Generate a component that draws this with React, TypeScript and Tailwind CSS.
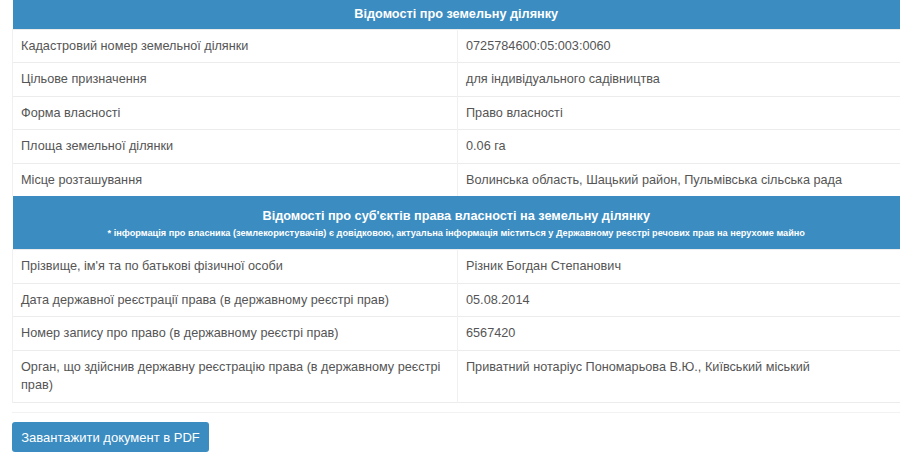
import React from 'react';

type Row = { label: React.ReactNode; value: string };

const landRows: Row[] = [
  { label: 'Кадастровий номер земельної ділянки', value: '0725784600:05:003:0060' },
  { label: 'Цільове призначення', value: 'для індивідуального садівництва' },
  { label: 'Форма власності', value: 'Право власності' },
  { label: 'Площа земельної ділянки', value: '0.06 га' },
  { label: 'Місце розташування', value: 'Волинська область, Шацький район, Пульмівська сільська рада' },
];

const ownerRows: Row[] = [
  { label: "Прізвище, ім'я та по батькові фізичної особи", value: 'Різник Богдан Степанович' },
  { label: 'Дата державної реєстрації права (в державному реєстрі прав)', value: '05.08.2014' },
  { label: 'Номер запису про право (в державному реєстрі прав)', value: '6567420' },
  {
    label: 'Орган, що здійснив державну реєстрацію права (в державному реєстрі прав)',
    value: 'Приватний нотаріус Пономарьова В.Ю., Київський міський',
  },
];

function DataRow({ row, last }: { row: Row; last?: boolean }) {
  return (
    <tr className="border-t border-[#ececec]">
      <td
        className={`w-[445px] border-l border-[#f0f0f0] px-[8px] pt-[7px] align-top leading-[18.6px] ${
          last ? 'pb-[7px]' : 'pb-[7px]'
        }`}
      >
        {row.label}
      </td>
      <td className="border-l border-[#f0f0f0] px-[8px] py-[7px] align-top leading-[18.6px]">{row.value}</td>
    </tr>
  );
}

export default function App() {
  return (
    <div
      className="w-[900px] h-[460px] overflow-hidden bg-white text-[12.7px] text-[#555]"
      style={{ fontFamily: '"Liberation Sans", Arial, sans-serif' }}
    >
      <div className="pl-[12px]">
        <table className="w-[888px] border-collapse">
          <tbody>
            <tr>
              <th colSpan={2} className="bg-[#3a8cc1] h-[29px] text-center font-bold text-white">
                Відомості про земельну ділянку
              </th>
            </tr>
            {landRows.map((r, i) => (
              <DataRow key={i} row={r} />
            ))}
            <tr>
              <th colSpan={2} className="bg-[#3a8cc1] h-[53px] pt-[2px] text-center text-white">
                <div className="font-bold leading-[18px]">Відомості про суб'єктів права власності на земельну ділянку</div>
                <div className="mt-[2px] text-[9.2px] font-bold leading-[13px]">
                  * інформація про власника (землекористувачів) є довідковою, актуальна інформація міститься у Державному реєстрі речових прав на нерухоме майно
                </div>
              </th>
            </tr>
            {ownerRows.map((r, i) => (
              <DataRow key={i} row={r} last={i === ownerRows.length - 1} />
            ))}
            <tr className="border-t border-[#ececec]">
              <td colSpan={2} className="h-[10px] p-0" />
            </tr>
          </tbody>
        </table>
        <div className="border-t border-[#f2f2f2] pt-[9px]">
          <button className="h-[30px] w-[197px] rounded-[3px] bg-[#3a8cc1] text-white text-[13px]">
            Завантажити документ в PDF
          </button>
        </div>
      </div>
    </div>
  );
}
